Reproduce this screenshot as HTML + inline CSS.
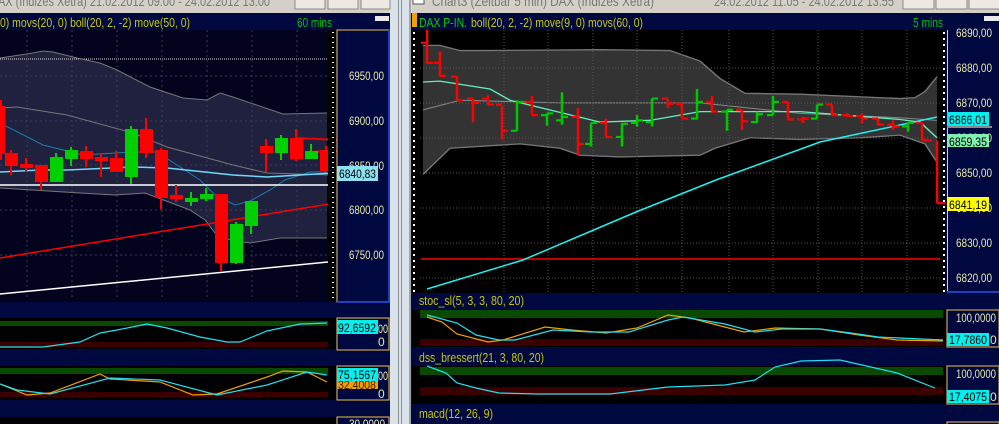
<!DOCTYPE html>
<html><head><meta charset="utf-8"><style>
html,body{margin:0;padding:0;background:#d4d0c8;}
svg{display:block;font-family:"Liberation Sans",sans-serif;}
</style></head><body>
<svg width="999" height="424" viewBox="0 0 999 424" xmlns="http://www.w3.org/2000/svg">
<rect x="0" y="0" width="999" height="424" fill="#d4d0c8"/>
<rect x="389" y="0" width="23" height="424" fill="#dbe3ea"/>
<rect x="398" y="0" width="1" height="424" fill="#8c9096"/>
<rect x="401" y="0" width="1" height="424" fill="#8c9096"/>
<rect x="409" y="0" width="2" height="424" fill="#a0a4a8"/>
<text x="-2" y="6" font-size="14" fill="#777" textLength="272" lengthAdjust="spacingAndGlyphs">AX (Indizes Xetra) 21.02.2012 09:00 - 24.02.2012 13:00</text>
<g fill="#ece9e2" stroke="#8a8a8a"><rect x="295" y="-4" width="30" height="13"/><rect x="328" y="-4" width="30" height="13"/><rect x="361" y="-4" width="29" height="13"/>
<rect x="903" y="-4" width="31" height="13"/><rect x="936" y="-4" width="31" height="13"/><rect x="969" y="-4" width="31" height="13"/></g>
<rect x="413" y="-2" width="11" height="6" fill="#fff" stroke="#555"/>
<text x="432" y="6" font-size="14" fill="#777" textLength="222" lengthAdjust="spacingAndGlyphs">Chart3 (Zeitbar 5 min)  DAX (Indizes Xetra)</text>
<text x="714" y="6" font-size="14" fill="#777" textLength="180" lengthAdjust="spacingAndGlyphs">24.02.2012 11:05 - 24.02.2012 13:55</text>

<!-- LEFT -->
<rect x="0" y="13" width="390" height="411" fill="#000840"/>
<text x="0" y="27" font-size="13" fill="#c8c800" textLength="190" lengthAdjust="spacingAndGlyphs">0) movs(20, 0) boll(20, 2, -2) move(50, 0)</text>
<text x="297" y="27" font-size="13" fill="#00c000" textLength="35" lengthAdjust="spacingAndGlyphs">60 mins</text>
<rect x="375" y="16" width="14" height="5" fill="#e8e8e8"/>
<rect x="0" y="30" width="336" height="272" fill="#03031e"/>
<polygon points="0,58 33,53 43,51 53,52 77,58 100,63 117,70 150,87 183,98 207,100 220,93 233,97 283,114 327,113 327,238 280,238 250,243 230,240 215,233 205,220 190,210 145,193 115,195 80,193 0,188" fill="#20203f"/>
<g stroke="#3a3a5a" stroke-dasharray="2,3" stroke-width="1">
<line x1="0" y1="76" x2="330" y2="76"/><line x1="0" y1="121" x2="330" y2="121"/><line x1="0" y1="165" x2="330" y2="165"/><line x1="0" y1="210" x2="330" y2="210"/><line x1="0" y1="255" x2="330" y2="255"/>
<line x1="27" y1="30" x2="27" y2="300"/><line x1="72" y1="30" x2="72" y2="300"/><line x1="117" y1="30" x2="117" y2="300"/><line x1="162" y1="30" x2="162" y2="300"/><line x1="207" y1="30" x2="207" y2="300"/><line x1="252" y1="30" x2="252" y2="300"/><line x1="297" y1="30" x2="297" y2="300"/></g>
<line x1="0" y1="59" x2="328" y2="59" stroke="#ddd" stroke-dasharray="1,1"/>
<polyline points="0,58 33,53 43,51 53,52 77,58 100,63 117,70 150,87 183,98 207,100 220,93 233,97 283,114 327,113" fill="none" stroke="#777" />
<polyline points="327,238 280,238 250,243 230,240 215,233 205,220 190,210 145,193 115,195 80,193 0,188" fill="none" stroke="#777"/>
<polyline points="0,108 17,107 67,115 133,133 167,147 233,165 267,173 333,175" fill="none" stroke="#777"/>
<polyline points="0,123 43,145 83,155 133,152 157,152 200,180 215,195 235,205 250,201 270,190 285,180 310,172 327,172" fill="none" stroke="#1a7fa8"/>
<polyline points="0,172 40,170 67,170 133,167 167,168 233,175 267,177 333,173" fill="none" stroke="#70d8f8" stroke-width="1.5"/>
<line x1="0" y1="185" x2="328" y2="185" stroke="#fff" stroke-width="1.5"/>
<line x1="0" y1="258" x2="335" y2="203" stroke="#f00" stroke-width="1.5"/>
<line x1="0" y1="294" x2="328" y2="262" stroke="#fff" stroke-width="1.5"/>
<line x1="297" y1="138" x2="340" y2="140" stroke="#e00" stroke-width="2"/>
<line x1="305" y1="152" x2="340" y2="151" stroke="#e00" stroke-width="2"/>
<g stroke-width="2">
<g stroke="#f00" fill="#f00">
<line x1="1" y1="100" x2="1" y2="160"/><rect x="0" y="107" width="4" height="46"/>
<line x1="11" y1="150" x2="11" y2="175"/><rect x="6" y="154" width="11" height="11"/>
<line x1="26" y1="158" x2="26" y2="172"/><rect x="21" y="165" width="11" height="2"/>
<line x1="41" y1="166" x2="41" y2="190"/><rect x="36" y="166" width="11" height="15"/>
<line x1="86" y1="146" x2="86" y2="167"/><rect x="81" y="152" width="11" height="6"/>
<line x1="101" y1="154" x2="101" y2="177"/><rect x="96" y="158" width="11" height="2"/>
<line x1="116" y1="151" x2="116" y2="171"/><rect x="111" y="159" width="11" height="12"/>
<line x1="146" y1="118" x2="146" y2="158"/><rect x="141" y="130" width="11" height="22"/>
<line x1="161" y1="148" x2="161" y2="209"/><rect x="156" y="151" width="11" height="46"/>
<line x1="176" y1="185" x2="176" y2="202"/><rect x="171" y="196" width="11" height="2"/>
<line x1="221" y1="195" x2="221" y2="271"/><rect x="216" y="195" width="11" height="67"/>
<line x1="266" y1="139" x2="266" y2="172"/><rect x="261" y="147" width="11" height="5"/>
<line x1="296" y1="129" x2="296" y2="161"/><rect x="291" y="139" width="11" height="19"/>
<line x1="326" y1="146" x2="326" y2="172"/><rect x="321" y="151" width="11" height="19"/>
</g>
<g stroke="#00d000" fill="#00d000">
<line x1="56" y1="153" x2="56" y2="181"/><rect x="51" y="158" width="11" height="23"/>
<line x1="71" y1="147" x2="71" y2="166"/><rect x="66" y="151" width="11" height="7"/>
<line x1="131" y1="126" x2="131" y2="184"/><rect x="126" y="130" width="11" height="46"/>
<line x1="191" y1="192" x2="191" y2="206"/><rect x="186" y="199" width="11" height="2"/>
<line x1="206" y1="188" x2="206" y2="201"/><rect x="201" y="195" width="11" height="3"/>
<line x1="236" y1="222" x2="236" y2="264"/><rect x="231" y="225" width="11" height="37"/>
<line x1="251" y1="202" x2="251" y2="234"/><rect x="246" y="202" width="11" height="23"/>
<line x1="281" y1="135" x2="281" y2="160"/><rect x="276" y="139" width="11" height="13"/>
<line x1="311" y1="144" x2="311" y2="158"/><rect x="306" y="152" width="11" height="6"/>
</g></g>
<rect x="328" y="30" width="8" height="272" fill="#000"/>
<g stroke="#fff" stroke-width="2" stroke-dasharray="1,4"><line x1="333" y1="32" x2="333" y2="300"/></g>
<rect x="337" y="30" width="52" height="272" fill="#000840" stroke="#f0c040" stroke-width="1"/>
<line x1="389" y1="30" x2="389" y2="302" stroke="#2040c0" stroke-width="2"/>
<line x1="337" y1="302" x2="389" y2="302" stroke="#2040c0" stroke-width="2"/>
<g font-size="12" fill="#e8e8a8" lengthAdjust="spacingAndGlyphs">
<text x="349" y="80" textLength="35" lengthAdjust="spacingAndGlyphs">6950,00</text><text x="349" y="125" textLength="35" lengthAdjust="spacingAndGlyphs">6900,00</text><text x="349" y="170" textLength="35" lengthAdjust="spacingAndGlyphs">6850,00</text><text x="349" y="214" textLength="35" lengthAdjust="spacingAndGlyphs">6800,00</text><text x="349" y="259" textLength="35" lengthAdjust="spacingAndGlyphs">6750,00</text></g>
<rect x="337" y="166" width="41" height="15" fill="#8ce0f0"/>
<text x="339" y="178" font-size="12" fill="#000" textLength="37" lengthAdjust="spacingAndGlyphs">6840,83</text>
<rect x="0" y="318" width="336" height="31" fill="#000"/>
<rect x="0" y="321" width="328" height="5" fill="#0a4a00"/>
<rect x="0" y="342" width="328" height="5" fill="#3a0000"/>
<polyline points="0,347 43,347 80,342 100,333 117,330 147,324 167,328 200,337 227,342 240,342 267,331 300,324 327,323" fill="none" stroke="#20e0f0" stroke-width="1.2"/>
<rect x="337" y="318" width="52" height="32" fill="#000840" stroke="#f0c040"/>
<text x="378" y="346" font-size="12" fill="#e8e8a8">0</text>
<text x="378" y="333" font-size="12" fill="#e8e8a8" textLength="10" lengthAdjust="spacingAndGlyphs">00</text>
<rect x="337" y="320" width="41" height="14" fill="#00f0f0"/>
<text x="338" y="332" font-size="12" fill="#000" textLength="38" lengthAdjust="spacingAndGlyphs">92,6592</text>
<rect x="0" y="366" width="336" height="34" fill="#000"/>
<rect x="0" y="368" width="328" height="6" fill="#0a4a00"/>
<rect x="0" y="392" width="328" height="5" fill="#3a0000"/>
<polyline points="0,384 27,395 50,393 100,374 110,379 160,382 193,395 217,394 267,377 283,371 307,372 327,382" fill="none" stroke="#f0a000" stroke-width="1.2"/>
<polyline points="0,384 17,390 50,394 110,378 160,380 217,395 267,385 307,372 327,375" fill="none" stroke="#20e0f0" stroke-width="1.2"/>
<rect x="337" y="366" width="52" height="34" fill="#000840" stroke="#f0c040"/>
<text x="378" y="398" font-size="12" fill="#e8e8a8">0</text>
<text x="378" y="380" font-size="12" fill="#e8e8a8" textLength="10" lengthAdjust="spacingAndGlyphs">00</text>
<rect x="337" y="379" width="41" height="10" fill="#f0a000"/>
<text x="338" y="389" font-size="12" fill="#402000" textLength="38" lengthAdjust="spacingAndGlyphs">32,4008</text>
<rect x="337" y="368" width="41" height="13" fill="#00f0f0"/>
<text x="338" y="379" font-size="12" fill="#000" textLength="38" lengthAdjust="spacingAndGlyphs">75,1567</text>
<rect x="0" y="417" width="336" height="7" fill="#000"/>
<rect x="337" y="417" width="52" height="10" fill="#000840" stroke="#f0c040"/>
<text x="349" y="428" font-size="12" fill="#e8e8a8" textLength="36" lengthAdjust="spacingAndGlyphs">30,0000</text>

<!-- RIGHT -->
<rect x="411" y="13" width="588" height="411" fill="#000840"/>
<rect x="412" y="13" width="5" height="14" fill="#f0a000"/>
<text x="419" y="27" font-size="13" fill="#00d000" textLength="48" lengthAdjust="spacingAndGlyphs">DAX P-IN.</text>
<text x="471" y="27" font-size="13" fill="#c8c800" textLength="172" lengthAdjust="spacingAndGlyphs">boll(20, 2, -2) move(9, 0) movs(60, 0)</text>
<text x="913" y="27" font-size="13" fill="#00c000" textLength="30" lengthAdjust="spacingAndGlyphs">5 mins</text>
<rect x="984" y="16" width="15" height="5" fill="#e8e8e8"/>
<rect x="412" y="30" width="534" height="263" fill="#000"/>
<g transform="scale(1,0.872)">
<polygon points="423,52 440,52 460,58 480,58 600,57 670,58 700,70 720,90 745,107 800,108 900,113 915,112 925,105 937,88 937,186 925,165 900,155 860,158 800,160 750,158 715,170 700,178 620,180 580,178 560,170 520,165 450,170 423,200" fill="#333"/>
<polyline points="423,52 440,52 460,58 480,58 600,57 670,58 700,70 720,90 745,107 800,108 900,113 915,112 925,105 937,88" fill="none" stroke="#777" stroke-width="1.5"/>
<polyline points="937,186 925,165 900,155 860,158 800,160 750,158 715,170 700,178 620,180 580,178 560,170 520,165 450,170 423,200" fill="none" stroke="#777" stroke-width="1.5"/>
<polyline points="423,126 460,115 560,118 700,118 800,130 900,135 937,138" fill="none" stroke="#888" stroke-width="1.2"/>
</g>
<g stroke="#555" stroke-dasharray="1,2">
<line x1="420" y1="68" x2="940" y2="68"/><line x1="420" y1="103" x2="940" y2="103"/><line x1="420" y1="138" x2="940" y2="138"/><line x1="420" y1="173" x2="940" y2="173"/><line x1="420" y1="208" x2="940" y2="208"/><line x1="420" y1="243" x2="940" y2="243"/><line x1="420" y1="278" x2="940" y2="278"/>
<line x1="504" y1="30" x2="504" y2="293"/><line x1="548" y1="30" x2="548" y2="293"/><line x1="593" y1="30" x2="593" y2="293"/><line x1="637" y1="30" x2="637" y2="293"/><line x1="682" y1="30" x2="682" y2="293"/><line x1="729" y1="30" x2="729" y2="293"/><line x1="773" y1="30" x2="773" y2="293"/><line x1="818" y1="30" x2="818" y2="293"/><line x1="862" y1="30" x2="862" y2="293"/><line x1="907" y1="30" x2="907" y2="293"/></g>
<g stroke="#fff" stroke-width="2" stroke-dasharray="2,4"><line x1="414" y1="32" x2="414" y2="292"/><line x1="944" y1="32" x2="944" y2="292"/></g>
<line x1="421" y1="259" x2="940" y2="259" stroke="#f00" stroke-width="1.5"/>
<polyline points="427,289 523,260 636,212 716,180 820,142 900,125 937,117" fill="none" stroke="#20f0f0" stroke-width="1.5"/>
<g transform="scale(1,0.872)">
<polyline points="423,94 440,93 490,102 510,115 600,140 650,138 700,128 800,128 900,137 920,140 937,158" fill="none" stroke="#60f0c0" stroke-width="1.5"/>
<g stroke-width="2.5" fill="none">
<g stroke="#f00">
<path d="M427 34V73M421 49H427M427 72H433"/>
<path d="M440 59V88M434 72H440M440 87H446"/>
<path d="M457 88V115M451 88H457M457 115H463"/>
<path d="M473 113V140M467 113H473M473 118H479"/>
<path d="M488 109V120M482 113H488M488 120H494"/>
<path d="M502 122V160M496 120H502M502 150H508"/>
<path d="M532 110V132M526 117H532M532 132H538"/>
<path d="M578 124V178M572 134H578M578 165H584"/>
<path d="M606 136V157M600 141H606M606 157H612"/>
<path d="M668 114V124M662 113H668M668 119H674"/>
<path d="M682 119V136M676 119H682M682 136H688"/>
<path d="M712 110V128M706 117H712M712 128H718"/>
<path d="M742 126V149M736 126H742M742 139H748"/>
<path d="M788 117V137M782 117H788M788 137H794"/>
<path d="M803 134V141M797 137H803M803 136H809"/>
<path d="M832 120V132M826 120H832M832 132H838"/>
<path d="M847 130V134M841 132H847M847 133H853"/>
<path d="M862 130V141M856 133H862M862 136H868"/>
<path d="M878 136V144M872 136H878M878 143H884"/>
<path d="M893 138V149M887 143H893M893 145H899"/>
<path d="M922 140V161M916 141H922M922 161H932"/>
<path d="M937 161V233M937 233H945"/>
</g>
<g stroke="#00c800">
<path d="M517 115V150M511 150H517M517 117H523"/>
<path d="M547 130V144M541 132H547M547 130H553"/>
<path d="M562 106V143M556 138H562M562 134H568"/>
<path d="M591 141V168M585 165H591M591 141H597"/>
<path d="M622 141V168M616 157H622M622 142H628"/>
<path d="M637 132V145M631 141H637M637 138H643"/>
<path d="M652 113V145M646 140H652M652 113H658"/>
<path d="M697 102V137M691 136H697M697 117H703"/>
<path d="M727 126V150M721 128H727M727 126H733"/>
<path d="M757 128V141M751 140H757M757 131H763"/>
<path d="M773 110V132M767 132H773M773 117H779"/>
<path d="M817 120V136M811 136H817M817 120H823"/>
<path d="M908 141V151M902 145H908M908 141H914"/>
</g></g></g>
<rect x="947" y="30" width="52" height="263" fill="#000840"/>
<line x1="947.5" y1="30" x2="947.5" y2="293" stroke="#f0d060"/>
<line x1="947" y1="292" x2="999" y2="292" stroke="#2040c0" stroke-width="2"/>
<g font-size="12" fill="#e8e8a8">
<text x="956" y="37" textLength="36" lengthAdjust="spacingAndGlyphs">6890,00</text><text x="956" y="72" textLength="36" lengthAdjust="spacingAndGlyphs">6880,00</text><text x="956" y="107" textLength="36" lengthAdjust="spacingAndGlyphs">6870,00</text><text x="956" y="142" textLength="36" lengthAdjust="spacingAndGlyphs">6860,00</text><text x="956" y="177" textLength="36" lengthAdjust="spacingAndGlyphs">6850,00</text><text x="956" y="212" textLength="36" lengthAdjust="spacingAndGlyphs">6840,00</text><text x="956" y="247" textLength="36" lengthAdjust="spacingAndGlyphs">6830,00</text><text x="956" y="282" textLength="36" lengthAdjust="spacingAndGlyphs">6820,00</text></g>
<rect x="947" y="126" width="45" height="2" fill="#888"/>
<rect x="947" y="112" width="42" height="14" fill="#00f0f0"/>
<text x="949" y="124" font-size="12" fill="#000" textLength="38" lengthAdjust="spacingAndGlyphs">6866,01</text>
<rect x="947" y="134" width="42" height="13" fill="#80f0b0"/>
<text x="949" y="146" font-size="12" fill="#000" textLength="38" lengthAdjust="spacingAndGlyphs">6859,35</text>
<rect x="947" y="197" width="42" height="14" fill="#ffff00"/>
<text x="949" y="209" font-size="12" fill="#000" textLength="38" lengthAdjust="spacingAndGlyphs">6841,19</text>
<text x="419" y="305" font-size="13" fill="#c8c800" textLength="105" lengthAdjust="spacingAndGlyphs">stoc_sl(5, 3, 3, 80, 20)</text>
<rect x="412" y="310" width="534" height="37" fill="#000"/>
<rect x="420" y="310" width="523" height="8" fill="#0a4a00"/>
<rect x="420" y="339" width="523" height="7" fill="#3a0000"/>
<polyline points="427,317 442,322 457,334 488,342 503,340 545,327 572,330 606,333 637,328 668,315 690,318 744,332 775,328 820,329 859,335 897,340 943,341" fill="none" stroke="#f0a000" stroke-width="1.2"/>
<polyline points="427,315 457,323 476,335 499,340 515,340 553,330 591,332 629,332 668,320 683,317 725,324 755,332 782,329 820,329 851,333 878,337 943,340" fill="none" stroke="#20e0f0" stroke-width="1.2"/>
<rect x="947" y="310" width="52" height="37" fill="#000840" stroke="#f0c040"/>
<text x="956" y="322" font-size="12" fill="#e8e8a8" textLength="40" lengthAdjust="spacingAndGlyphs">100,0000</text>
<text x="990" y="344" font-size="12" fill="#e8e8a8">0</text>
<rect x="947" y="333" width="42" height="13" fill="#00f0f0"/>
<text x="949" y="344" font-size="12" fill="#000" textLength="38" lengthAdjust="spacingAndGlyphs">17,7860</text>
<text x="419" y="362" font-size="13" fill="#c8c800" textLength="125" lengthAdjust="spacingAndGlyphs">dss_bressert(21, 3, 80, 20)</text>
<rect x="412" y="366" width="534" height="38" fill="#000"/>
<rect x="420" y="367" width="523" height="8" fill="#0a4a00"/>
<rect x="420" y="387" width="523" height="8" fill="#3a0000"/>
<polyline points="427,366 446,373 457,383 476,388 499,393 538,394 610,394 668,387 725,385 755,380 775,367 801,361 840,360 897,373 935,388" fill="none" stroke="#20e0f0" stroke-width="1.2"/>
<rect x="947" y="366" width="52" height="38" fill="#000840" stroke="#f0c040"/>
<text x="956" y="378" font-size="12" fill="#e8e8a8" textLength="40" lengthAdjust="spacingAndGlyphs">100,0000</text>
<text x="990" y="401" font-size="12" fill="#e8e8a8">0</text>
<rect x="947" y="390" width="42" height="13" fill="#00f0f0"/>
<text x="949" y="401" font-size="12" fill="#000" textLength="38" lengthAdjust="spacingAndGlyphs">17,4075</text>
<text x="419" y="418" font-size="13" fill="#c8c800" textLength="74" lengthAdjust="spacingAndGlyphs">macd(12, 26, 9)</text>
<rect x="947" y="422" width="52" height="5" fill="#000840" stroke="#f0c040"/>
</svg>
</body></html>
